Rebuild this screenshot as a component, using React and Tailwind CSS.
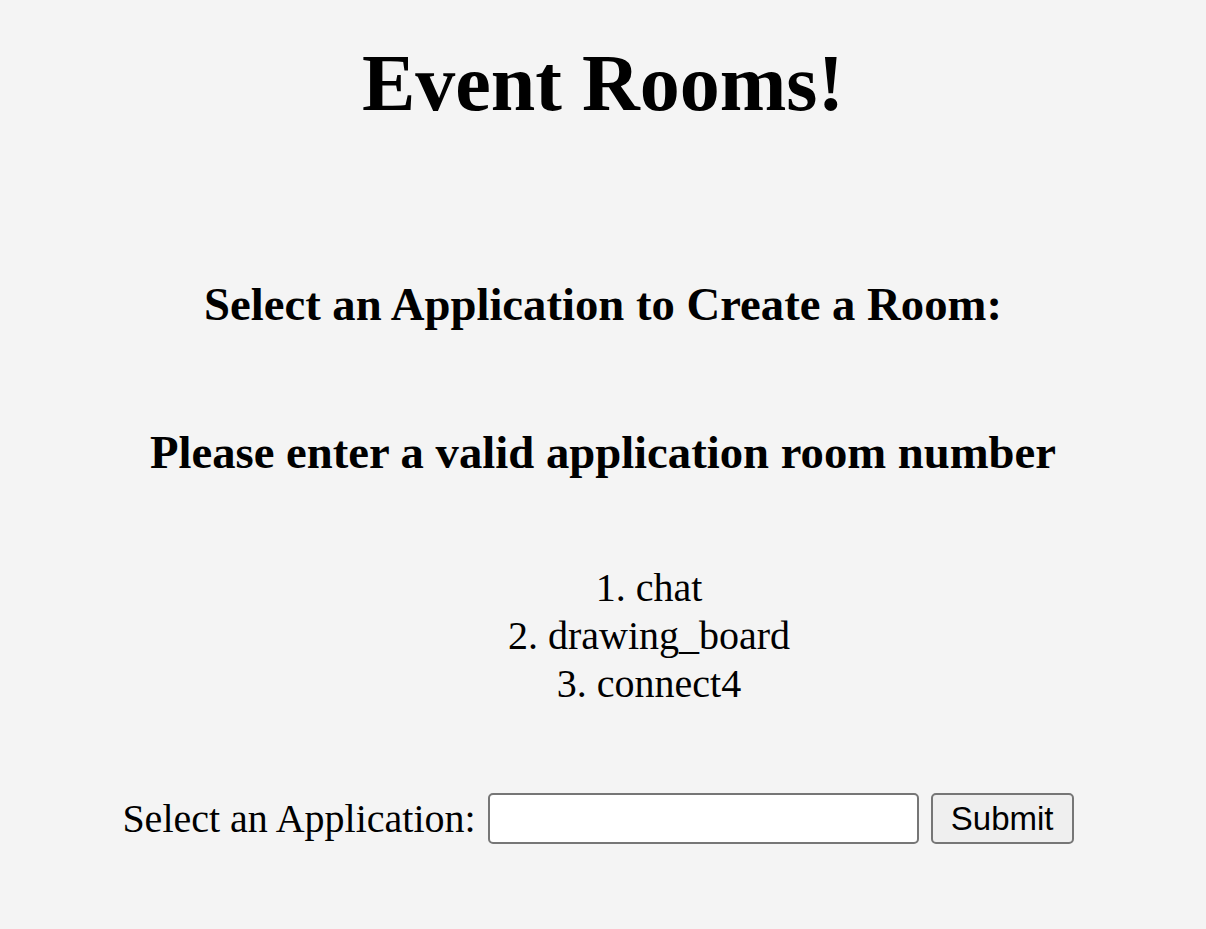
import React, { useState } from "react";

const apps = ["chat", "drawing_board", "connect4"];

export default function App() {
  const [room, setRoom] = useState("");

  return (
    <div className="min-h-[929px] bg-[#f4f4f4] text-black font-['Liberation_Serif',serif] flex flex-col items-center">
      <h1 className="mt-[37px] text-[80px] leading-[92px] font-bold">Event Rooms!</h1>

      <h3 className="mt-[148px] text-[46.7px] leading-[54px] font-bold">
        Select an Application to Create a Room:
      </h3>

      <h3 className="mt-[94px] text-[46.7px] leading-[54px] font-bold">
        Please enter a valid application room number
      </h3>

      <ol className="mt-[85px] pl-[92px] text-[40px] leading-[48px] text-center list-none">
        {apps.map((a, i) => (
          <li key={a}>
            {i + 1}. {a}
          </li>
        ))}
      </ol>

      <form
        className="mt-[85px] pr-[10px] flex items-center gap-[12px] text-[40px] leading-[48px]"
        onSubmit={(e) => e.preventDefault()}
      >
        <label htmlFor="room">Select an Application:</label>
        <input
          id="room"
          value={room}
          onChange={(e) => setRoom(e.target.value)}
          className="w-[431px] h-[51px] bg-white border-2 border-[#767676] rounded-[5px] px-2 text-[33px] font-['Liberation_Sans',sans-serif]"
        />
        <button
          type="submit"
          className="w-[143px] h-[51px] bg-[#efefef] border-2 border-[#767676] rounded-[5px] text-[33px] leading-none font-['Liberation_Sans',sans-serif]"
        >
          Submit
        </button>
      </form>
    </div>
  );
}
